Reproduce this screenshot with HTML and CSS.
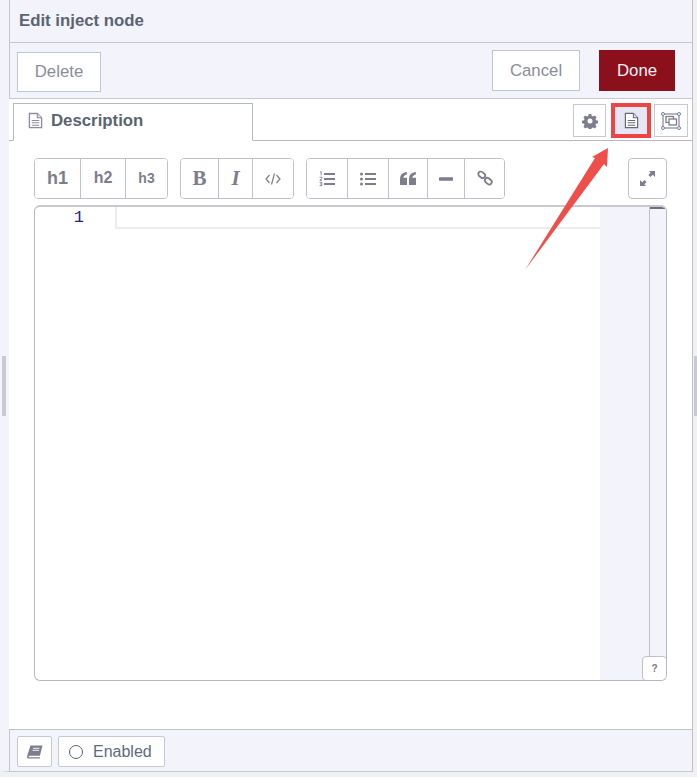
FILE: index.html
```html
<!DOCTYPE html>
<html lang="en">
<head>
<meta charset="utf-8">
<title>Edit inject node</title>
<link rel="stylesheet" href="styles.css">
</head>
<body>
<div class="grip grip-left"></div>
<div class="grip grip-right"></div>
<main class="tray">
  <header class="title-bar">Edit inject node</header>
  <div class="action-bar">
    <button class="btn btn-delete">Delete</button>
    <div class="action-right">
      <button class="btn btn-cancel">Cancel</button>
      <button class="btn btn-done">Done</button>
    </div>
  </div>
  <div class="tab-bar">
    <div class="tab">
      <svg class="tab-icon" width="15" height="17" viewBox="0 0 16 17"><path d="M1.500 1h8.500l4.500 4.500v10.500h-13z" fill="#fff" stroke="#8c8ca0" stroke-width="1.400"/><path d="M10 1v4.500h4.500" fill="#e4e4ee" stroke="#8c8ca0" stroke-width="1.200"/><path d="M4 8.500h8M4 11h8M4 13.500h8" stroke="#8c8ca0" stroke-width="1.100"/></svg>
      <span>Description</span>
    </div>
    <div class="tab-tools">
      <button class="tool tool-gear"><svg width="16" height="16" viewBox="0 0 16 16"><path d="M6.700 1h2.600l.4 2 1.300.55 1.750-1.100 1.800 1.800-1.100 1.750.55 1.300 2 .4v2.600l-2 .4-.55 1.300 1.100 1.750-1.800 1.800-1.750-1.100-1.300.55-.4 2h-2.600l-.4-2-1.300-.55-1.750 1.100-1.800-1.800 1.100-1.750-.55-1.300-2-.4v-2.600l2-.4.55-1.300-1.100-1.750 1.800-1.800 1.750 1.100 1.300-.55z" fill="#7d7d8e"/><circle cx="8" cy="8" r="2.500" fill="#fff"/></svg></button>
      <button class="tool tool-active"><svg width="15" height="17" viewBox="0 0 16 17"><path d="M1.500 1h8.500l4.500 4.500v10.500h-13z" fill="#fff" stroke="#66687c" stroke-width="1.300"/><path d="M10 1v4.500h4.500" fill="#e4e4ee" stroke="#66687c" stroke-width="1.100"/><path d="M4 8.500h8M4 11h8M4 13.500h8" stroke="#66687c" stroke-width="1.100"/></svg></button>
      <button class="tool tool-frame"><svg width="20" height="18" viewBox="0 0 20 18"><rect x="2" y="2" width="16" height="14" fill="none" stroke="#85859a" stroke-width="1.200"/><rect x="5" y="4.500" width="7.500" height="6" fill="none" stroke="#7d7d8e" stroke-width="1.300"/><rect x="8" y="7" width="7.500" height="6" fill="#fff" stroke="#7d7d8e" stroke-width="1.300"/><g fill="#fff" stroke="#6f83a0" stroke-width="1"><circle cx="2" cy="2" r="1.500"/><circle cx="18" cy="2" r="1.500"/><circle cx="2" cy="16" r="1.500"/><circle cx="18" cy="16" r="1.500"/></g></svg></button>
    </div>
  </div>
  <section class="content">
    <div class="toolbar">
      <div class="group">
        <button class="tb tb-h1 h-lg">h1</button>
        <button class="tb tb-h2 h-md">h2</button>
        <button class="tb tb-h3 h-sm">h3</button>
      </div>
      <div class="group">
        <button class="tb tb-b serif-b">B</button>
        <button class="tb tb-i serif-i">I</button>
        <button class="tb tb-code"><svg width="16" height="12" viewBox="0 0 16 12"><path d="M4.500 2 1 6l3.500 4M11.500 2 15 6l-3.500 4M9.500 .5 6.500 11.500" fill="none" stroke="#7d7d8e" stroke-width="1.200"/></svg></button>
      </div>
      <div class="group">
        <button class="tb tb-ol"><svg width="16" height="16" viewBox="0 0 16 16"><path d="M5 3h11M5 8h11M5 13h11" stroke="#7d7d8e" stroke-width="2"/><path d="M1 .8h1.200v3.500M.6 6.300h2.200v1.200L.8 9.300h2.200M.6 11.300h2.200v3.400H.6M1.200 13h1.500" fill="none" stroke="#7d7d8e" stroke-width=".9"/></svg></button>
        <button class="tb tb-ul"><svg width="16" height="14" viewBox="0 0 16 14"><path d="M5 2h11M5 7h11M5 12h11" stroke="#7d7d8e" stroke-width="2"/><circle cx="1.500" cy="2" r="1.500" fill="#7d7d8e"/><circle cx="1.500" cy="7" r="1.500" fill="#7d7d8e"/><circle cx="1.500" cy="12" r="1.500" fill="#7d7d8e"/></svg></button>
        <button class="tb tb-quote"><svg width="16" height="13" viewBox="0 0 16 13"><path d="M0 13V7.500C0 3 2 .8 6.800 0v2.500C4.700 3 3.600 4 3.400 5.800H7V13zM9 13V7.500C9 3 11 .8 15.800 0v2.500C13.700 3 12.600 4 12.400 5.800H16V13z" fill="#7d7d8e"/></svg></button>
        <button class="tb tb-hr"><svg width="14" height="4" viewBox="0 0 14 4"><rect width="14" height="3.500" y=".2" rx=".5" fill="#7d7d8e"/></svg></button>
        <button class="tb tb-link"><svg class="link-icon" width="16" height="16" viewBox="0 0 16 16"><g fill="none" stroke="#7d7d8e" stroke-width="1.800"><rect x="1" y="2.300" width="7.400" height="5" rx="2.500" transform="rotate(40 4.700 4.800)"/><rect x="7.600" y="8.700" width="7.400" height="5" rx="2.500" transform="rotate(40 11.300 11.200)"/></g></svg></button>
      </div>
      <button class="tb tb-expand"><svg width="15" height="15" viewBox="0 0 15 15"><path d="M9 0h6v6l-2.200-2.200-2.300 2.300-2.100-2.100 2.300-2.300zM6 15H0V9l2.200 2.200 2.300-2.300 2.100 2.100-2.300 2.300z" fill="#7d7d8e"/></svg></button>
    </div>
    <div class="editor">
      <div class="gutter"><span class="line-no">1</span></div>
      <div class="code"><div class="active-line"></div></div>
      <div class="minimap"></div>
      <div class="scroll-track"><div class="scroll-thumb"></div></div>
      <button class="help">?</button>
    </div>
  </section>
  <footer class="footer">
    <button class="foot-btn foot-book"><svg width="16" height="14" viewBox="0 0 16 14"><path d="M3.500 .5h12l-2.600 10.300H2.700c-1 0-1.300.8-.9 1.400h11.300l-.3 1.300H1.400C.2 13.500-.2 12.300.2 11z" fill="#7d7d8e"/><path d="M6 3.300h6.500M5.500 5.300H12" stroke="#fff" stroke-width=".9"/></svg></button>
    <button class="foot-btn foot-enabled"><span class="ring"></span><span>Enabled</span></button>
  </footer>
</main>
<svg class="arrow" width="90" height="125" viewBox="0 0 90 125"><path d="M1 124 L71 12 L68 11 L84 2 L83 21 L80 18 Z" fill="#ef4f4a"/></svg>
</body>
</html>
```

FILE: styles.css
```css
* { box-sizing: border-box; }
html, body { margin: 0; padding: 0; }
body {
  position: relative;
  width: 697px;
  height: 777px;
  overflow: hidden;
  background: #f1f1f4;
  font-family: "Liberation Sans", Arial, sans-serif;
  color: #5a6470;
}
button { font-family: inherit; margin: 0; padding: 0; background: #fff; cursor: pointer; }
.tray {
  width: 693px;
  height: 772px;
  border-left: 9px solid #f3f3fc;
  border-right: 1px solid #bfbfca;
  border-bottom: 1px solid #c8c8d2;
  background: #fff;
  display: flex;
  flex-direction: column;
  box-shadow: inset 1px 0 0 #c4c4ce;
}
.grip { position: absolute; background: #c9c9d1; width: 4px; height: 60px; top: 356px; }
.grip-left { left: 2px; }
.grip-right { left: 694px; }
.title-bar {
  height: 43px;
  flex: none;
  padding: 11px 0 0 10px;
  font-size: 16.8px;
  line-height: 19px;
  font-weight: 700;
  background: #f3f3fc;
  border-bottom: 1px solid #c8c8d4;
  box-shadow: inset 1px 0 0 #c4c4ce;
}
.action-bar {
  height: 56px;
  flex: none;
  display: flex;
  justify-content: space-between;
  padding: 7px 17px 0 8px;
  background: #f3f3fc;
  border-bottom: 1px solid #c8c8d4;
  box-shadow: inset 1px 0 0 #c4c4ce;
}
.action-right { display: flex; gap: 19px; }
.btn {
  height: 41px;
  font-size: 16.8px;
  border: 1px solid #c4c4cf;
  color: #8a8c9a;
}
.btn-delete { width: 84px; margin-top: 2px; height: 40px; }
.btn-cancel { width: 88px; }
.btn-done { width: 76px; background: #8c101c; border-color: #8c101c; color: #f4f0f4; }
.tab-bar {
  height: 42px;
  flex: none;
  display: flex;
  justify-content: space-between;
  padding: 4px 4px 0 4px;
  border-bottom: 1px solid #b8b8c4;
  background: #fff;
  position: relative;
}
.tab {
  width: 240px;
  height: 38px;
  display: flex;
  align-items: flex-start;
  gap: 8px;
  padding: 7px 0 0 14px;
  border: 1px solid #b8b8c4;
  border-bottom: 1px solid #fff;
  background: #fff;
  font-size: 16.8px;
  font-weight: 700;
  line-height: 19px;
}
.tab-icon { margin-top: 1px; flex: none; }
.tab-tools { display: flex; align-items: flex-start; gap: 3px; }
.tool {
  width: 34px;
  height: 34px;
  border: 1px solid #c8c8d2;
  display: flex;
  align-items: center;
  justify-content: center;
}
.tool-gear { width: 33px; margin-right: 2px; margin-top: 1px; height: 33px; }
.tool-active {
  width: 40px;
  height: 35px;
  border: 4px solid #ee4444;
  background: #e6e6f4;
}
.tool-frame { margin-top: 1px; height: 33px; }
.content { flex: 1; padding: 17px 25px 0 25px; background: #fff; }
.toolbar { display: flex; height: 41px; }
.group {
  display: flex;
  margin-right: 12px;
  border: 1px solid #c0c0cb;
  border-radius: 4px;
  overflow: hidden;
}
.tb {
  border: 0;
  height: 100%;
  display: flex;
  align-items: center;
  justify-content: center;
  color: #7d7d8e;
  font-weight: 700;
  border-right: 1px solid #c0c0cb;
}
.group .tb:last-child { border-right: 0; }
.h-lg { font-size: 18px; padding-bottom: 1px; }
.h-md { font-size: 16px; padding-bottom: 2px; }
.h-sm { font-size: 14px; padding-bottom: 1px; }
.serif-b { font-family: "Liberation Serif", serif; font-size: 21px; }
.serif-i { font-family: "Liberation Serif", serif; font-size: 21px; font-style: italic; }
.tb-h1 { width: 46px; }
.tb-h2 { width: 45px; }
.tb-h3 { width: 41px; }
.tb-b { width: 38px; }
.tb-i { width: 34px; }
.tb-code { width: 40px; }
.tb-ol { width: 41px; }
.tb-ul { width: 41px; }
.tb-quote { width: 39px; }
.tb-hr { width: 37px; }
.tb-link { width: 39px; padding-bottom: 2px; }
.tb-expand {
  width: 39px;
  margin-left: 111px;
  border: 1px solid #c0c0cb;
  border-radius: 4px;
}
.editor {
  position: relative;
  display: flex;
  width: 633px;
  height: 476px;
  margin-top: 6px;
  border: 1px solid #b8b8c4;
  border-top: 2px solid #c8c8d2;
  border-radius: 6px;
  overflow: hidden;
  background: #fff;
}
.gutter { width: 80px; flex: none; text-align: right; padding: 1px 31px 0 0; }
.line-no { font-family: "Liberation Mono", monospace; font-size: 17px; line-height: 20px; color: #2c1e8e; }
.code { flex: none; width: 485px; }
.active-line { height: 22px; border: 2px solid #ececf0; border-right: 0; border-top: 0; }
.minimap { flex: none; width: 49px; background: #f3f3fc; }
.scroll-track { flex: 1; background: #f3f3fc; border-left: 1px solid #c0c0cb; }
.scroll-thumb { height: 2px; background: #6e6e7c; }
.help {
  position: absolute;
  right: -1px;
  bottom: -1px;
  width: 25px;
  height: 25px;
  border: 1px solid #c0c0cb;
  border-radius: 4px;
  font-size: 10px;
  font-weight: 700;
  color: #7d7d8e;
}
.footer {
  height: 42px;
  flex: none;
  display: flex;
  gap: 6px;
  padding: 6px 0 0 8px;
  background: #f3f3fc;
  border-top: 1px solid #c0c0cb;
  box-shadow: inset 1px 0 0 #c4c4ce;
}
.foot-btn {
  height: 31px;
  border: 1px solid #c8c8d2;
  border-radius: 2px;
  display: flex;
  align-items: center;
  justify-content: center;
}
.foot-book { width: 35px; }
.foot-enabled { width: 107px; gap: 10px; font-size: 16px; color: #5f6a7a; justify-content: flex-start; padding: 1px 0 0 10px; }
.ring { width: 14px; height: 14px; border: 1.5px solid #556478; border-radius: 50%; }
.arrow { position: absolute; left: 524px; top: 146px; }
```
